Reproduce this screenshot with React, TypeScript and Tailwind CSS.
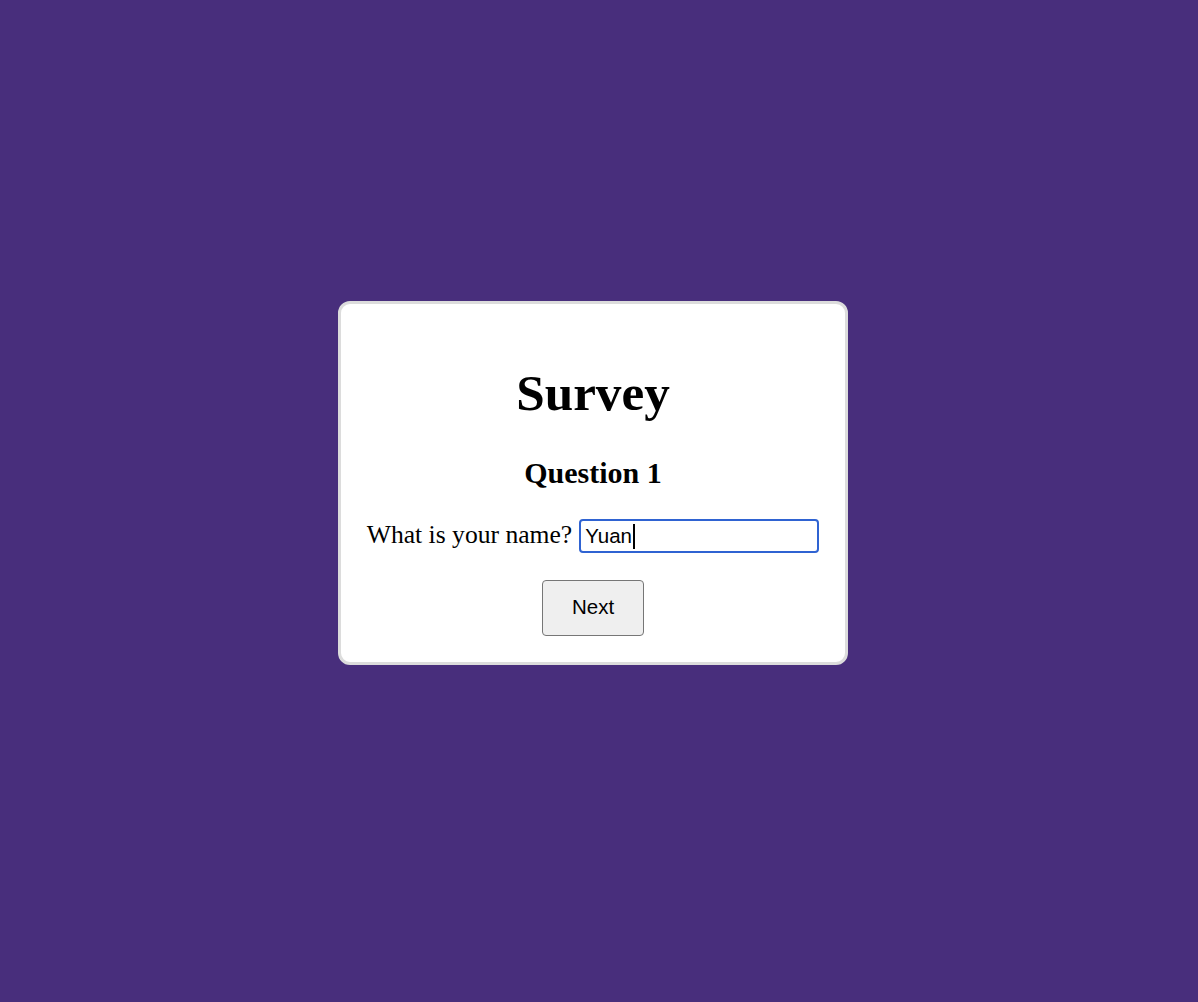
import { useState } from "react";

export default function App() {
  const [name, setName] = useState("Yuan");

  return (
    <div className="flex h-[1002px] w-full items-center justify-center bg-[#482e7c] pb-[37px] pr-[12px]">
      <div
        className="flex w-[510px] flex-col items-center rounded-[12px] border-[3px] border-[#dcdcdc] bg-white px-[23px] pb-[26px] pt-[26px] text-black"
        style={{ fontFamily: '"Liberation Serif", "Times New Roman", serif' }}
      >
        <h1 className="mt-[33px] text-[51.2px] font-bold leading-[59px]">Survey</h1>
        <h3 className="mt-[34px] text-[30px] font-bold leading-[34px]">Question 1</h3>

        <div className="mt-[28px] flex items-baseline gap-[7px]">
          <label htmlFor="name" className="text-[25.6px] leading-[34px]">
            What is your name?
          </label>
          <div className="relative">
            <input
              id="name"
              value={name}
              onChange={(e) => setName(e.target.value)}
              className="h-[34px] w-[240px] rounded-[4px] border-2 border-[#2f63d2] bg-white px-[4px] text-[20.5px] leading-[30px] text-black outline-none"
              style={{ fontFamily: '"Liberation Sans", Arial, sans-serif' }}
            />
            {/* fake caret */}
            <span className="absolute left-[54px] top-[5px] h-[25px] w-[1.5px] bg-black" />
          </div>
        </div>

        <button
          className="mt-[27px] h-[56px] w-[102px] rounded-[4px] border border-[#767676] bg-[#efefef] text-[20.5px] text-black"
          style={{ fontFamily: '"Liberation Sans", Arial, sans-serif' }}
        >
          Next
        </button>
      </div>
    </div>
  );
}
